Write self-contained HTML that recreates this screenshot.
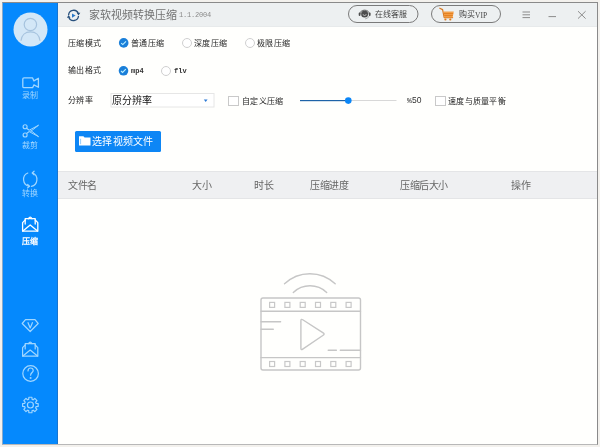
<!DOCTYPE html>
<html lang="zh-CN">
<head>
<meta charset="utf-8">
<style>
*{margin:0;padding:0;box-sizing:border-box}
html,body{width:600px;height:447px;overflow:hidden;background:#f3f1ed;font-family:"Liberation Sans",sans-serif}
.a{position:absolute;white-space:nowrap;line-height:1;will-change:transform}
.rad{position:absolute;width:10px;height:10px;border-radius:50%;border:1px solid #cfcfcf;background:#fff}
.chk{position:absolute;width:11px;height:10px;border:1px solid #c9c9c9;background:#fff}
.st{font-size:8px;color:#a0d6ff;font-weight:500}
.th{font-size:10px;letter-spacing:-0.5px;color:#666;margin-top:-0.5px}
.lb{font-size:8px;letter-spacing:0.25px;color:#222}
.mono{font-size:7px;font-family:'Liberation Mono',monospace;font-weight:bold;color:#333}
</style>
</head>
<body>
<div class="a" style="left:2px;top:2px;width:596px;height:443px;border:1px solid #8a8a8a;border-bottom-color:#b8b8b8;border-left-color:#86a9cc;background:#fffffd"></div>
<div class="a" style="left:3px;top:3px;width:55px;height:441px;background:#0589fd;border-right:1px solid #1774d0"></div>
<div class="a" style="left:58px;top:3px;width:539px;height:24px;background:#edf0f1;border-bottom:1px solid #e7eaeb"></div>
<div class="a" style="left:58px;top:171px;width:539px;height:28px;background:#eff0f2;border-top:1px solid #e4e5e7;border-bottom:1px solid #e4e5e7"></div>

<svg class="a" style="left:0;top:0" width="600" height="447" fill="none">
  <!-- avatar -->
  <circle cx="30.5" cy="29.5" r="17" fill="#d3e7f7"/>
  <circle cx="30.4" cy="24.5" r="6.2" stroke="#a6c3de" stroke-width="1.2"/>
  <path d="M21 40.8 C21.5 35 25.5 31.8 30.5 31.8 C35.5 31.8 39.5 35 40 40.8" stroke="#a6c3de" stroke-width="1.2"/>
  <!-- camera -->
  <g stroke="#a0d6ff" stroke-width="1.3" stroke-linejoin="round">
    <path d="M24 77.9 H32.6 L33.9 80.9 L38.4 78.3 V87.3 L33.9 84.9 L32.6 87.7 H24 Q22.8 87.7 22.8 86.5 V79.1 Q22.8 77.9 24 77.9 Z"/>
  </g>
  <!-- scissors -->
  <g stroke="#a0d6ff" stroke-width="1.15" stroke-linejoin="round">
    <circle cx="25.1" cy="126.7" r="2"/>
    <circle cx="25.1" cy="135" r="2"/>
    <path d="M26.6 128.2 L29.4 130.4 M26.6 133.5 L29.4 131.4"/>
    <path d="M29.2 130.2 L38.6 125.2 L30.4 131.6" stroke-width="1"/>
    <path d="M29.2 131.6 L38.6 136.7 L30.4 130.2" stroke-width="1"/>
  </g>
  <!-- rotate -->
  <g stroke="#a0d6ff" stroke-width="1.2" stroke-linecap="round" stroke-linejoin="round">
    <path d="M27.8 173 A7 7 0 0 0 29.2 186.3"/>
    <path d="M32.6 173 A7 7 0 0 1 31.4 186.3"/>
    <path d="M27.6 184.4 L29.5 186.2 L27.6 187.9"/>
    <path d="M34.1 171.2 L32.2 173 L34.1 174.8"/>
  </g>
  <!-- envelope active -->
  <g stroke="#ffffff" stroke-width="1.3" stroke-linejoin="round" stroke-linecap="round" transform="translate(0 0)">
    <path d="M25.2 224 V218.7 H35.2 V224"/>
    <path d="M28.4 218.7 Q30.2 215.4 32 218.7"/>
    <path d="M25.2 220 L22.6 222.6 V231.2 H37.8 V222.6 L35.2 220"/>
    <path d="M22.9 231 L30.2 225 L37.5 231"/>
  </g>
  <!-- diamond -->
  <g stroke="#a0d6ff" stroke-width="1.2" stroke-linejoin="round">
    <path d="M25.5 319.6 H35 L38.2 323.5 L30.2 331.5 L22.2 323.5 Z"/>
    <path d="M27.8 322.3 L30.2 328 L32.6 322.3"/>
  </g>
  <!-- envelope 2 -->
  <g stroke="#a0d6ff" stroke-width="1.2" stroke-linejoin="round" stroke-linecap="round" transform="translate(0 125)">
    <path d="M25.2 224 V218.7 H35.2 V224"/>
    <path d="M28.4 218.7 Q30.2 215.4 32 218.7"/>
    <path d="M25.2 220 L22.6 222.6 V231.2 H37.8 V222.6 L35.2 220"/>
    <path d="M22.9 231 L30.2 225 L37.5 231"/>
  </g>
  <!-- question -->
  <g stroke="#a0d6ff" stroke-width="1.2" stroke-linecap="round">
    <circle cx="30.6" cy="373.5" r="7.8"/>
    <path d="M28 371 C28 368.8 29.3 368 30.6 368 C32 368 33.2 369 33.2 370.6 C33.2 372.4 30.6 372.8 30.6 375.2"/>
    <circle cx="30.6" cy="378" r="0.4"/>
  </g>
  <!-- gear -->
  <g stroke="#a0d6ff" stroke-width="1.2" stroke-linejoin="round">
    <path d="M28.19 399.53 L28.68 399.36 L28.89 397.25 L31.91 397.25 L32.12 399.36 L32.71 399.57 L33.17 399.79 L34.82 398.45 L36.95 400.58 L35.61 402.23 L35.87 402.79 L36.04 403.28 L38.15 403.49 L38.15 406.51 L36.04 406.72 L35.83 407.31 L35.61 407.77 L36.95 409.42 L34.82 411.55 L33.17 410.21 L32.61 410.47 L32.12 410.64 L31.91 412.75 L28.89 412.75 L28.68 410.64 L28.09 410.43 L27.63 410.21 L25.98 411.55 L23.85 409.42 L25.19 407.77 L24.93 407.21 L24.76 406.72 L22.65 406.51 L22.65 403.49 L24.76 403.28 L24.97 402.69 L25.19 402.23 L23.85 400.58 L25.98 398.45 L27.63 399.79 Z"/>
    <circle cx="30.4" cy="405" r="3"/>
  </g>
  <!-- title icon -->
  <g stroke="#27507d" stroke-width="1.3" fill="none">
    <path d="M68.6 15 A5 5 0 0 1 78.3 13.6"/>
    <path d="M78.5 16 A5 5 0 0 1 68.8 17.2"/>
  </g>
  <path d="M76.7 12.8 L80.3 12.8 L78.5 15.6 Z M66.9 17.8 L70.5 17.8 L68.6 15 Z" fill="#27507d"/>
  <path d="M72 13.5 L75.6 15.6 L72 17.7 Z" fill="#2a78c8"/>
  <!-- headset -->
  <path d="M359.7 14.4 A4.95 4.95 0 0 1 369.5 14.4" stroke="#666" stroke-width="1"/>
  <path d="M369.3 15.8 A4.95 4.95 0 0 1 365.2 18.9" stroke="#999" stroke-width="0.8"/>
  <circle cx="364.6" cy="14" r="3.5" fill="#4d4d4d"/>
  <path d="M362.8 14.6 Q364.6 16.4 366.4 14.6" stroke="#cfcfcf" stroke-width="0.9"/>
  <rect x="358.7" y="12.6" width="1.8" height="3.4" rx="0.9" fill="#4d4d4d"/>
  <rect x="368.8" y="12.6" width="1.8" height="3.4" rx="0.9" fill="#4d4d4d"/>
  <!-- cart -->
  <path d="M439.8 8.2 L442.6 9.6 L444.2 17.6 H452.6" stroke="#d7781f" stroke-width="1.2" stroke-linecap="round" stroke-linejoin="round"/>
  <path d="M443.4 11.4 H453.8 L452.6 17.6 H444.4 Z" fill="#f4a04a"/>
  <path d="M443.8 13.6 H453.2 M444.2 15.6 H452.8" stroke="#e07c1c" stroke-width="0.9"/>
  <circle cx="445.4" cy="19.5" r="1.1" fill="#e07c1c"/>
  <circle cx="450.3" cy="19.5" r="1.1" fill="#e07c1c"/>
  <!-- checked radios -->
  <circle cx="123.7" cy="42.9" r="4.8" fill="#1a7fd9"/>
  <path d="M121.2 43.1 L122.8 44.6 L126 41.3" stroke="#bdf0ff" stroke-width="1.1"/>
  <circle cx="123.5" cy="70.8" r="4.8" fill="#1a7fd9"/>
  <path d="M121 71 L122.6 72.5 L125.8 69.2" stroke="#bdf0ff" stroke-width="1.1"/>
  <!-- dropdown -->
  <rect x="111" y="93.5" width="103" height="13.5" fill="#fff" stroke="#e6e6e6"/>
  <path d="M203.8 99.6 H207.6 L205.7 102 Z" fill="#2d7bd6"/>
  <!-- slider -->
  <rect x="300" y="100" width="96.5" height="1" fill="#d8d8d8"/>
  <rect x="300" y="100" width="48" height="1.2" fill="#1e63a8"/>
  <circle cx="348.3" cy="100.6" r="3.3" fill="#0b86f7"/>
  <!-- button -->
  <rect x="75" y="131" width="86" height="21" rx="1.5" fill="#0d86f5"/>
  <path d="M79 137.5 V136.3 H83.4 L84.6 137.5 H90.5 V145.6 H79 Z" fill="#fff"/>
  <path d="M80.6 138.8 V144.2" stroke="#7cc0fa" stroke-width="0.8"/>
  <!-- film illustration -->
  <g stroke="#c6c6c6" stroke-width="1.4" fill="none" stroke-linecap="round" stroke-linejoin="round">
    <rect x="261" y="298" width="99.5" height="72" rx="2"/>
    <path d="M261 311.2 H360.5 M261 357.6 H360.5"/>
    <path d="M261 321.8 H280.6 M261 329.3 H273.3 M328.2 350.2 H336.4 M340.3 350.2 H360.5"/>
    <path d="M302.75 319.78 L323.15 332.82 Q325.00 334.00 323.18 335.24 L302.72 349.16 Q300.90 350.40 300.90 348.20 L300.90 320.80 Q300.90 318.60 302.75 319.78 Z"/>
    <path d="M284.5 283.8 A36.8 36.8 0 0 1 335.2 283.8"/>
    <path d="M293.3 292.5 A24.2 24.2 0 0 1 326.7 292.5"/>
  </g>
  <g stroke="#c8c8c8" stroke-width="1.2" fill="none">
    <rect x="269.6" y="302.4" width="5" height="5"/>
    <rect x="284.9" y="302.4" width="5" height="5"/>
    <rect x="300.2" y="302.4" width="5" height="5"/>
    <rect x="315.5" y="302.4" width="5" height="5"/>
    <rect x="330.8" y="302.4" width="5" height="5"/>
    <rect x="346.1" y="302.4" width="5" height="5"/>
    <rect x="269.6" y="361.5" width="5" height="5"/>
    <rect x="284.9" y="361.5" width="5" height="5"/>
    <rect x="300.2" y="361.5" width="5" height="5"/>
    <rect x="315.5" y="361.5" width="5" height="5"/>
    <rect x="330.8" y="361.5" width="5" height="5"/>
    <rect x="346.1" y="361.5" width="5" height="5"/>
  </g>
  <!-- window controls -->
  <g stroke="#8c8c8c" stroke-width="1">
    <path d="M522.5 12 H530 M522.5 14.8 H530 M522.5 17.6 H530"/>
    <path d="M548.5 16.6 H556"/>
    <path d="M578 11.2 L585.6 18.6 M585.6 11.2 L578 18.6"/>
  </g>
  <!-- pills -->
  <rect x="348.5" y="5.5" width="69.5" height="17" rx="8.5" stroke="#7a7a7a" stroke-width="1"/>
  <rect x="431.5" y="5.5" width="69" height="17" rx="8.5" stroke="#7a7a7a" stroke-width="1"/>
</svg>

<!-- sidebar labels -->
<div class="a st" style="left:22px;top:91.5px">录制</div>
<div class="a st" style="left:21.5px;top:141.5px">裁剪</div>
<div class="a st" style="left:21.5px;top:189.7px">转换</div>
<div class="a st" style="left:22.3px;top:237.5px;color:#fff;font-weight:bold">压缩</div>

<!-- title -->
<div class="a" style="left:89px;top:10px;font-size:11px;color:#727272">家软视频转换压缩</div>
<div class="a" style="left:179px;top:12px;font-size:7px;letter-spacing:-0.2px;font-family:'Liberation Mono',monospace;color:#8a8a8a">1.1.2004</div>
<div class="a" style="left:375px;top:10.5px;font-size:8px;color:#444">在线客服</div>
<div class="a" style="left:459px;top:10.5px;font-size:8px;color:#444">购买<span style="font-family:'Liberation Serif',serif;font-size:7.5px;position:relative;top:0.5px">VIP</span></div>

<!-- row 1 -->
<div class="a lb" style="left:68px;top:40px">压缩模式</div>
<div class="a lb" style="left:131.3px;top:40px">普通压缩</div>
<div class="rad" style="left:182px;top:38px"></div>
<div class="a lb" style="left:194px;top:40px">深度压缩</div>
<div class="rad" style="left:244.5px;top:38px"></div>
<div class="a lb" style="left:257px;top:40px">极限压缩</div>
<!-- row 2 -->
<div class="a lb" style="left:68px;top:67px">输出格式</div>
<div class="a mono" style="left:130.6px;top:67.5px">mp4</div>
<div class="rad" style="left:161px;top:66px"></div>
<div class="a mono" style="left:173.5px;top:67.5px">flv</div>
<!-- row 3 -->
<div class="a lb" style="left:68.3px;top:97.3px">分辨率</div>
<div class="a" style="left:112.3px;top:96px;font-size:10px;color:#111">原分辨率</div>
<div class="chk" style="left:228px;top:96px"></div>
<div class="a lb" style="left:241.5px;top:97.5px">自定义压缩</div>
<div class="a" style="left:406.8px;top:96.6px;font-size:8px;font-family:'Liberation Mono',monospace;color:#333">%</div>
<div class="a" style="left:411.8px;top:96.3px;font-size:8.5px;color:#333">50</div>
<div class="chk" style="left:435px;top:96px"></div>
<div class="a lb" style="left:448px;top:97.5px">速度与质量平衡</div>
<!-- button -->
<div class="a" style="left:92.3px;top:137px;font-size:10px;letter-spacing:0.3px;color:#fff">选择视频文件</div>
<!-- table header -->
<div class="a th" style="left:68.3px;top:181.5px">文件名</div>
<div class="a th" style="left:192.2px;top:181.5px">大小</div>
<div class="a th" style="left:254.2px;top:181.5px">时长</div>
<div class="a th" style="left:310.3px;top:181.5px">压缩进度</div>
<div class="a th" style="left:400.1px;top:181.5px">压缩后大小</div>
<div class="a th" style="left:510.6px;top:181.5px">操作</div>
</body>
</html>
